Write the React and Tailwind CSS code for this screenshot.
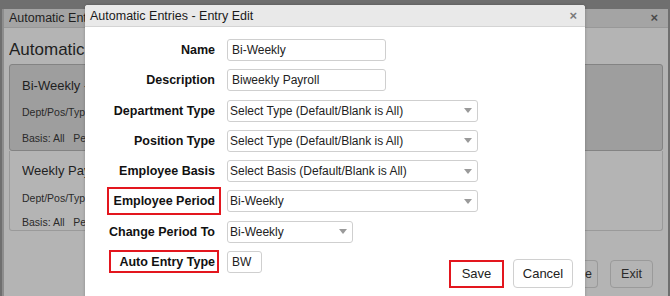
import React from "react";

const rows = [
  { label: "Name", kind: "input", value: "Bi-Weekly", width: "w-[159px]" },
  { label: "Description", kind: "input", value: "Biweekly Payroll", width: "w-[159px]" },
  { label: "Department Type", kind: "select", value: "Select Type (Default/Blank is All)", width: "w-[251px]" },
  { label: "Position Type", kind: "select", value: "Select Type (Default/Blank is All)", width: "w-[251px]" },
  { label: "Employee Basis", kind: "select", value: "Select Basis (Default/Blank is All)", width: "w-[251px]" },
  { label: "Employee Period", kind: "select", value: "Bi-Weekly", width: "w-[251px]", mark: "big" },
  { label: "Change Period To", kind: "select", value: "Bi-Weekly", width: "w-[126px]" },
  { label: "Auto Entry Type", kind: "input", value: "BW", width: "w-[35px]", mark: "small" },
];

const Caret = () => (
  <svg width="8" height="5" viewBox="0 0 8 5" className="shrink-0">
    <polygon points="0,0 8,0 4,5" fill="#9a9a9a" />
  </svg>
);

const Field = ({ row }) => {
  if (row.kind === "select") {
    return (
      <div
        className={`${row.width} h-[22px] flex items-center justify-between pl-[2px] pr-[5px] border border-[#cfcfcf] rounded-[3px] bg-white text-[12px] text-[#222]`}
      >
        <span className="whitespace-nowrap">{row.value}</span>
        <Caret />
      </div>
    );
  }
  return (
    <div
      className={`${row.width} h-[22px] flex items-center pl-[4px] border border-[#cfcfcf] rounded-[3px] bg-white text-[12px] text-[#222]`}
    >
      {row.value}
    </div>
  );
};

const Label = ({ row }) => {
  if (row.mark === "big") {
    return (
      <span className="block -my-[3px] -mr-[6px] py-[4px] pl-[5px] pr-[4px] border-2 border-[#e3161e]">
        {row.label}
      </span>
    );
  }
  if (row.mark === "small") {
    return (
      <span className="block -mt-[2px] -mb-[1px] -mr-[4px] pt-[2px] pb-[1px] pl-[8px] pr-[2px] border-2 border-[#e3161e]">
        {row.label}
      </span>
    );
  }
  return <span className="block">{row.label}</span>;
};

// a line of the dimmed page that is cut off where the dialog starts
const Clip = ({ className, children }) => (
  <div className={`overflow-hidden whitespace-nowrap ${className}`}>{children}</div>
);

const App = () => {
  return (
    <div className="relative w-[670px] h-[296px] overflow-hidden bg-[#6f6f6f] font-['Liberation_Sans',Arial,sans-serif]">
      {/* Background window, dimmed */}
      <div className="mt-[9px] ml-[2px] mr-[2px] h-[287px] flex flex-col bg-[#b4b4b4] border-l-2 border-[#8d8d8d]">
        <div className="h-[19px] flex items-center justify-between pl-[5px] pr-[10px] bg-[#a4a4a4] border-b border-[#989898] text-[12.5px] text-[#1f1f1f]">
          <Clip className="w-[78px]">Automatic Entries</Clip>
          <span className="text-[13px] font-bold text-[#4a4a4a]">×</span>
        </div>
        <div className="flex-1 flex flex-col px-[5px]">
          <Clip className="mt-[12px] w-[78px] leading-[20px] text-[17px] text-[#1f1f1f]">Automatic Entries</Clip>
          <div className="mt-[4px] h-[87px] flex flex-col bg-[#9e9e9e] border border-[#838383] rounded-[3px] px-[12px]">
            <Clip className="mt-[11px] w-[65px] text-[13px] text-[#1f1f1f]">Bi-Weekly - Biweekly Payroll</Clip>
            <Clip className="mt-[9.5px] w-[65px] text-[10.5px] text-[#2a2a2a]">Dept/Pos/Type: All</Clip>
            <Clip className="mt-[10px] w-[65px] text-[10.5px] text-[#2a2a2a]">Basis: All&nbsp;&nbsp;&nbsp;Period: Bi-Weekly</Clip>
          </div>
          <div className="h-[80px] flex flex-col border border-t-0 border-[#9a9a9a] rounded-b-[3px] px-[12px]">
            <Clip className="mt-[10px] w-[65px] text-[13px] text-[#1f1f1f]">Weekly Payroll</Clip>
            <Clip className="mt-[11.5px] w-[65px] text-[10.5px] text-[#2a2a2a]">Dept/Pos/Type: All</Clip>
            <Clip className="mt-[8px] w-[65px] text-[10.5px] text-[#2a2a2a]">Basis: All&nbsp;&nbsp;&nbsp;Period: Weekly</Clip>
          </div>
          <div className="mt-auto mb-[8px] flex justify-end gap-[12px] pr-[10px]">
            <div className="h-[28px] w-[14px] flex items-center justify-end pr-[5px] border border-l-0 border-[#9a9a9a] rounded-r-[4px] text-[12.5px] text-[#2a2a2a]">
              e
            </div>
            <div className="h-[28px] w-[43px] flex items-center justify-center border border-[#9a9a9a] rounded-[4px] text-[12.5px] text-[#2a2a2a]">
              Exit
            </div>
          </div>
        </div>
      </div>

      {/* Modal */}
      <div className="absolute left-[85px] top-[5px] w-[500px] h-[300px] flex flex-col bg-white rounded-t-[3px] shadow-[0_0_3px_rgba(0,0,0,0.25)]">
        <div className="h-[22px] flex items-center justify-between pl-[5px] pr-[8px] pt-[1px] bg-[#e9e9e9] border-b border-[#d4d4d4] rounded-t-[3px] text-[12.5px] text-[#1a1a1a]">
          <span>Automatic Entries - Entry Edit</span>
          <span className="text-[13px] font-bold text-[#7a7a7a]">×</span>
        </div>
        <div className="pt-[12px] grid grid-cols-[130px_1fr] gap-x-[12px] gap-y-[8.3px] items-center">
          {rows.map((row) => (
            <React.Fragment key={row.label}>
              <div className="flex justify-end leading-[16px] text-[12.5px] font-bold text-[#111] whitespace-nowrap">
                <Label row={row} />
              </div>
              <Field row={row} />
            </React.Fragment>
          ))}
        </div>
        <div className="-mt-[14px] flex justify-end items-center gap-[9px] pr-[12px]">
          <div className="w-[55px] h-[28px] flex items-center justify-center border-2 border-[#e3161e] text-[13px] text-[#222]">
            Save
          </div>
          <div className="w-[60px] h-[29px] flex items-center justify-center border border-[#d0d0d0] rounded-[4px] text-[13px] text-[#222]">
            Cancel
          </div>
        </div>
      </div>
    </div>
  );
};

export default App;
